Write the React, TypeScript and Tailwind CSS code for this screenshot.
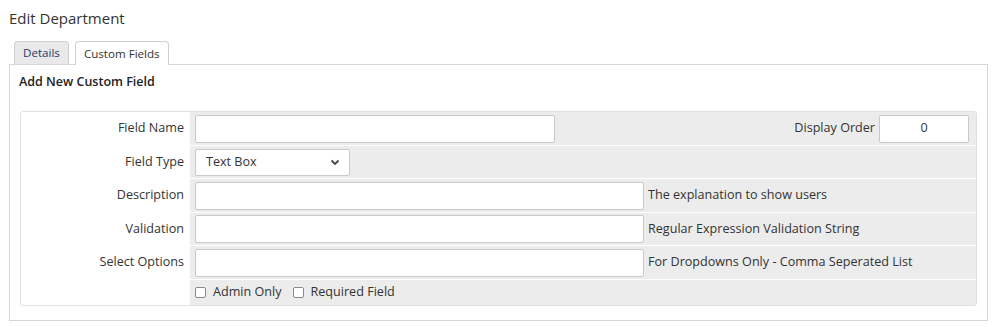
import React from "react";

const font = { fontFamily: '"Open Sans", "Noto Sans", sans-serif' };

function Row({
  label,
  h,
  children,
}: {
  label?: string;
  h: string;
  children: React.ReactNode;
}) {
  return (
    <div className={`flex ${h}`}>
      <div className="w-[169px] flex items-center justify-end pr-[6px] text-[12.6px] text-[#333]">
        {label}
      </div>
      <div className="flex-1 bg-[#ececec] flex items-center pl-[5px] text-[12.6px] text-[#333]">
        {children}
      </div>
    </div>
  );
}

function TextInput({ w }: { w: string }) {
  return (
    <div className={`${w} h-[28px] bg-white border border-[#c9c9c9] rounded-[2px]`} />
  );
}

function Check({ label }: { label: string }) {
  return (
    <div className="flex items-center">
      <span className="w-[11px] h-[11px] bg-white border border-[#8a8a8a] rounded-[2px] mr-[7px]" />
      <span>{label}</span>
    </div>
  );
}

export default function App() {
  return (
    <div className="bg-white w-[995px] h-[327px] pt-[8px]" style={font}>
      <div className="pl-[9px] text-[15px] leading-[20px] text-[#333]">Edit Department</div>
      <div className="flex items-end pl-[14px] mt-[12px] gap-[6px] text-[11.6px]">
        <div className="h-[23px] px-[8px] flex items-center bg-[#e9e9e9] border border-b-0 border-[#cfcfcf] rounded-t-[4px] text-[#233a6a]">
          Details
        </div>
        <div className="h-[24px] px-[8px] flex items-center bg-white border border-b-0 border-[#cfcfcf] rounded-t-[4px] text-[#333] relative top-[1px]">
          Custom Fields
        </div>
      </div>
      <div className="ml-[9px] mr-[7px] border border-[#d6d6d6] pl-[9px] pr-[10px] pt-[8px] pb-[14px]">
        <div className="text-[12.5px] leading-[18px] font-semibold text-[#222] mb-[20px]">
          Add New Custom Field
        </div>
        <div className="ml-[1px] border border-[#dde1e4] rounded-[3px] flex flex-col gap-[1px]">
          <Row label="Field Name" h="h-[33px]">
            <TextInput w="w-[360px]" />
            <div className="flex-1" />
            <span className="mr-[4px]">Display Order</span>
            <div className="w-[90px] h-[28px] bg-white border border-[#c9c9c9] rounded-[2px] mr-[7px] flex items-center justify-center">
              0
            </div>
          </Row>
          <Row label="Field Type" h="h-[32px]">
            <div className="w-[155px] h-[27px] bg-white border border-[#c9c9c9] rounded-[2px] flex items-center justify-between pl-[10px] pr-[9px]">
              <span>Text Box</span>
              <svg width="10" height="7" viewBox="0 0 10 7">
                <path d="M1.5 1.5 L5 5 L8.5 1.5" fill="none" stroke="#444" strokeWidth="1.8" />
              </svg>
            </div>
          </Row>
          <Row label="Description" h="h-[33px]">
            <TextInput w="w-[449px]" />
            <span className="ml-[4px]">The explanation to show users</span>
          </Row>
          <Row label="Validation" h="h-[32px]">
            <TextInput w="w-[449px]" />
            <span className="ml-[4px]">Regular Expression Validation String</span>
          </Row>
          <Row label="Select Options" h="h-[33px]">
            <TextInput w="w-[449px]" />
            <span className="ml-[4px]">For Dropdowns Only - Comma Seperated List</span>
          </Row>
          <Row h="h-[25px]">
            <div className="flex items-center gap-[11px]">
              <Check label="Admin Only" />
              <Check label="Required Field" />
            </div>
          </Row>
        </div>
      </div>
    </div>
  );
}
